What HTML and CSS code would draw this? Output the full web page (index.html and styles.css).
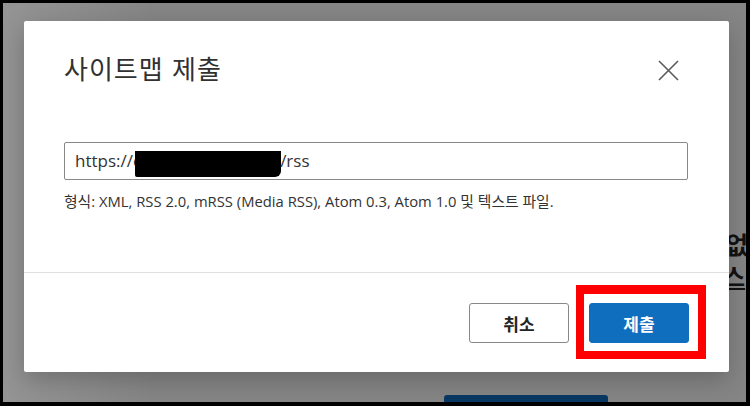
FILE: index.html
```html
<!DOCTYPE html>
<html lang="ko">
<head>
<meta charset="utf-8">
<link rel="stylesheet" href="styles.css">
</head>
<body>
<div class="screen">
  <div class="page">
    <div class="page-text page-text-1">값없</div>
    <div class="page-text page-text-2">시스</div>
    <div class="page-button"></div>
  </div>
  <div class="overlay"></div>
  <div class="dialog" role="dialog">
    <div class="dialog-head">
      <h1 class="dialog-title">사이트맵 제출</h1>
      <button class="close-btn" aria-label="닫기">
        <svg width="21" height="21" viewBox="0 0 21 21"><path d="M1 1 L20 20 M20 1 L1 20" stroke="#5a5a5a" stroke-width="1.6" fill="none"/></svg>
      </button>
    </div>
    <div class="dialog-body">
      <div class="url-input">
        <span class="url-text">https://c</span><span class="redact"></span><span class="url-text">/rss</span>
      </div>
      <p class="hint">형식: XML, RSS 2.0, mRSS (Media RSS), Atom 0.3, Atom 1.0 및 텍스트 파일.</p>
    </div>
    <div class="dialog-foot">
      <button class="btn btn-cancel">취소</button>
      <button class="btn btn-primary">제출</button>
    </div>
  </div>
  <div class="highlight"></div>
</div>
</body>
</html>
```
FILE: styles.css
```css
* { box-sizing: border-box; }
html, body { margin: 0; padding: 0; }
body {
  background: #000;
  width: 750px;
  height: 406px;
  overflow: hidden;
  font-family: "Open Sans", "Noto Sans CJK KR", sans-serif;
}
.screen {
  position: relative;
  margin: 3px 4px 4px 3px;
  width: 743px;
  height: 399px;
  overflow: hidden;
  background: #fff;
}
.page-text {
  position: absolute;
  font-family: "Noto Sans CJK KR", sans-serif;
  font-weight: 700;
  font-size: 24px;
  line-height: 30px;
  color: #222;
  white-space: nowrap;
}
.page-text-1 { left: 701px; top: 226px; }
.page-text-2 { left: 698px; top: 258px; text-decoration: underline; }
.page-button {
  position: absolute;
  left: 441px;
  top: 392px;
  width: 164px;
  height: 30px;
  border-radius: 3px;
  background: #0f6cbd;
}
.overlay {
  position: absolute;
  inset: 0;
  background: linear-gradient(90deg, rgba(0,0,0,0.42), rgba(0,0,0,0.48) 20%, rgba(0,0,0,0.48));
}
.dialog {
  position: absolute;
  left: 21px;
  top: 18px;
  width: 705px;
  height: 351px;
  background: #fff;
  border-radius: 2px;
  box-shadow: 0 8px 24px rgba(0,0,0,0.22);
  display: flex;
  flex-direction: column;
}
.dialog-head {
  display: flex;
  justify-content: space-between;
  align-items: flex-start;
  padding: 30px 50px 0 40px;
}
.dialog-title {
  margin: 0;
  font-family: "Noto Sans CJK KR", sans-serif;
  font-weight: 400;
  font-size: 26px;
  letter-spacing: 1px;
  line-height: 34px;
  color: #323130;
}
.close-btn {
  margin-top: 9px;
  padding: 0;
  border: 0;
  background: none;
  width: 21px;
  height: 21px;
  display: block;
}
.close-btn svg { display: block; }
.dialog-body {
  flex: 1;
  padding: 57px 41px 0 40px;
}
.url-input {
  height: 38px;
  border: 1px solid #8a8886;
  border-radius: 2px;
  display: flex;
  align-items: center;
  padding-left: 10px;
  font-size: 17px;
  color: #333;
}
.url-text { line-height: 20px; }
.redact {
  width: 146px;
  height: 26px;
  margin-top: 6px;
  background: #000;
  border-radius: 0 0 6px 2px;
  margin-left: -6px;
  margin-right: -1px;
}
.hint {
  margin: 12px 0 0;
  font-size: 14.8px;
  line-height: 18px;
  color: #333;
  font-family: "Open Sans", "Noto Sans CJK KR", sans-serif;
}
.dialog-foot {
  height: 100px;
  border-top: 1px solid #e1dfdd;
  padding: 30px 40px 0 0;
  display: flex;
  justify-content: flex-end;
  gap: 20px;
}
.btn {
  width: 100px;
  height: 40px;
  border-radius: 3px;
  font-family: "Noto Sans CJK KR", sans-serif;
  font-weight: 700;
  font-size: 17px;
  padding: 0;
  cursor: pointer;
}
.btn-cancel {
  background: #fff;
  border: 1px solid #8a8886;
  color: #252423;
}
.btn-primary {
  background: #106ebe;
  border: 1px solid #106ebe;
  color: #fff;
}
.highlight {
  position: absolute;
  left: 573px;
  top: 282px;
  width: 130px;
  height: 74px;
  border: 8px solid #ff0000;
  border-top-width: 9px;
}
```
